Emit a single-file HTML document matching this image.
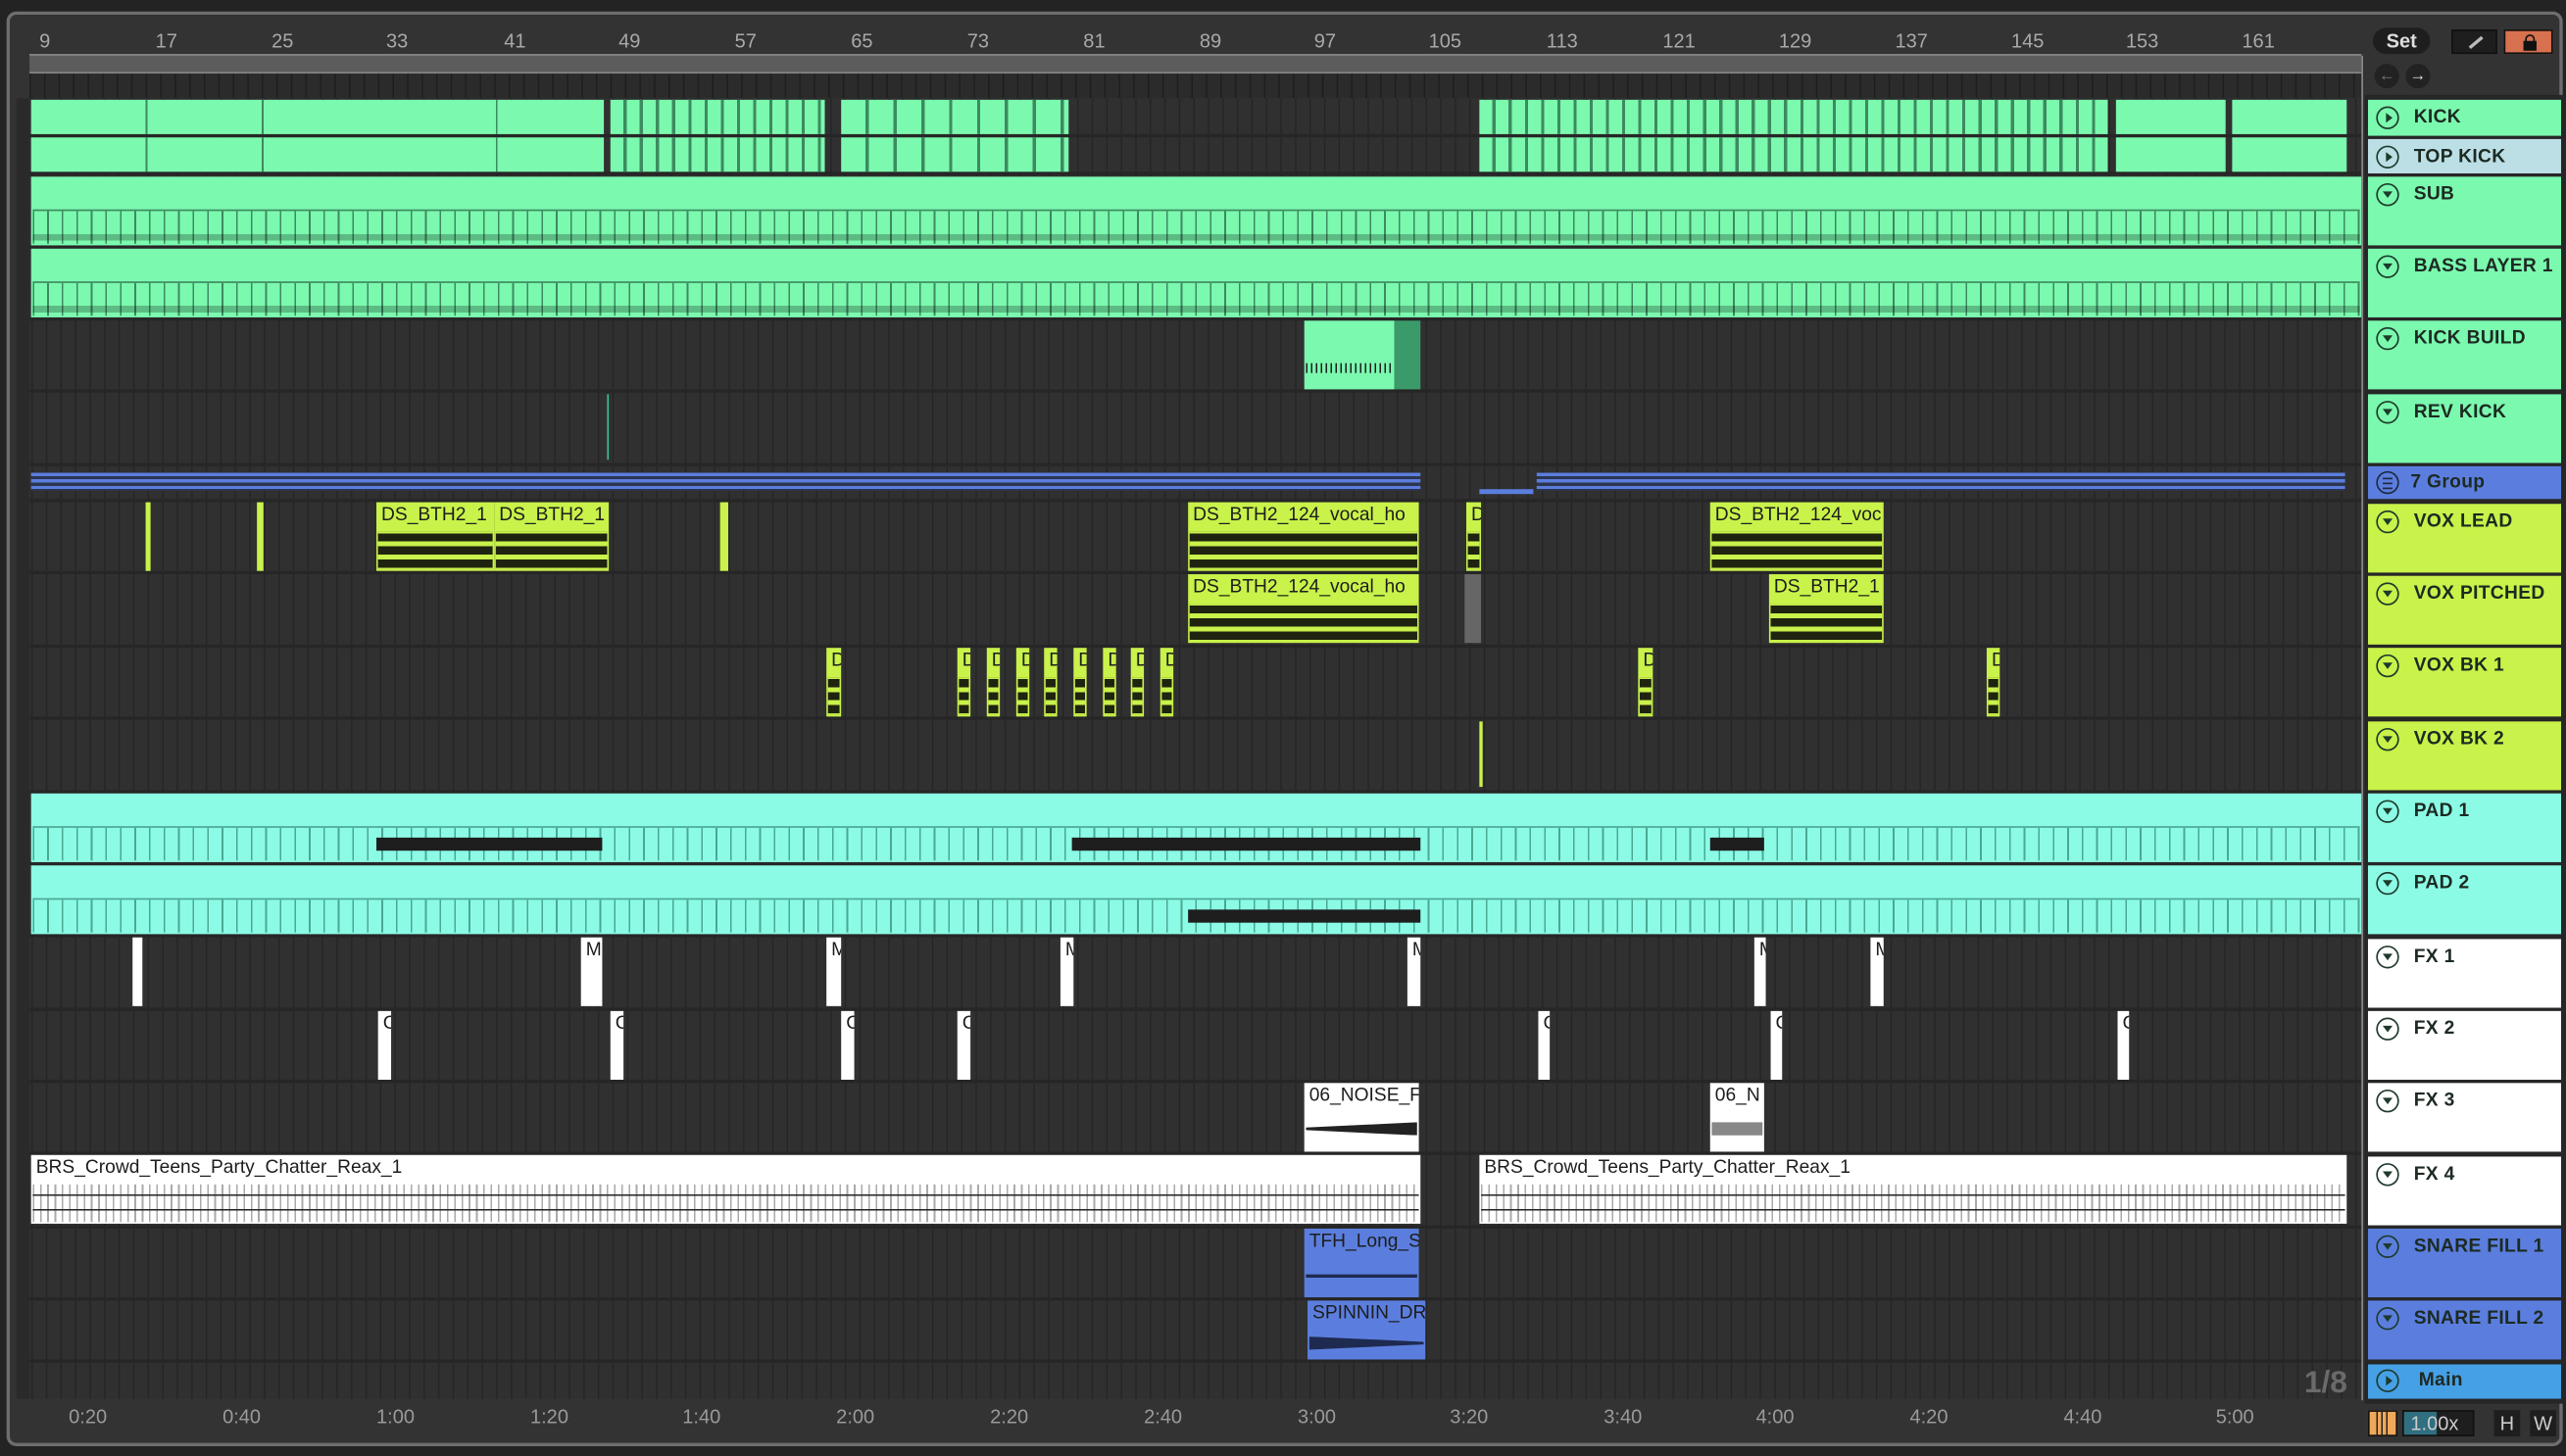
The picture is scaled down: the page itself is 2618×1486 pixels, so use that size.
<!DOCTYPE html>
<html><head><meta charset="utf-8"><style>
*{margin:0;padding:0;box-sizing:border-box}
html,body{width:2618px;height:1486px;overflow:hidden;background:#1f1f1f}
#s{position:absolute;left:0;top:0;width:1568px;height:890px;transform:scale(1.66964,1.66966);transform-origin:0 0;font-family:"Liberation Sans",sans-serif;background:#232323}
.frame{position:absolute;left:4px;top:7px;width:1562px;height:877px;border:2px solid #6e6e6e;border-radius:6px;background:#333}
.abs{position:absolute}
.arr{position:absolute;left:18px;top:60px;width:1425px;height:795px;background-color:#303030;background-image:linear-gradient(to right,#252525 0 1px,transparent 1px);background-size:8.88px 100%;background-position:1.2px 0}
.row{position:absolute;left:0;width:1425px}
.sep{position:absolute;left:0;width:1425px;height:2px;background:#262626}
.c{position:absolute;top:1px;bottom:1px;overflow:hidden;font-size:11.5px;white-space:nowrap;color:#1d1d1d}
.c .n{position:absolute;left:0;right:0;top:0;height:17px;padding:2px 3px;line-height:13px}
.c .w{position:absolute;left:1px;right:1px;top:18px;bottom:1px}
.g{background:#7bf9af}
.y{background:#c9f24a}
.wh{background:#fff}
.bl{background:#5b7ede}
.wy .w{background:repeating-linear-gradient(to bottom,#c9f24a 0 1px,#1f2410 1px 6px,#c9f24a 6px 9px,#1f2410 9px 14px,#c9f24a 14px 16px),#1f2410}
.hd{position:absolute;left:1447px;width:118px;font-size:11.5px;font-weight:bold;color:#1d2a22;letter-spacing:.2px}
.hd .ic{position:absolute;left:5px;top:4px;width:14px;height:14px;border:1.3px solid #1d3a2a;border-radius:50%}
.hd .ic.d::after{content:"";position:absolute;left:2.5px;top:4px;border-left:3.5px solid transparent;border-right:3.5px solid transparent;border-top:4.5px solid #1d3a2a}
.hd .ic.p::after{content:"";position:absolute;left:4.5px;top:2.5px;border-top:3.5px solid transparent;border-bottom:3.5px solid transparent;border-left:4.5px solid #1d3a2a}
.hd .ic.m::after{content:"";position:absolute;left:3px;top:3px;width:6px;height:5px;border-top:1px solid #1d2a40;border-bottom:1px solid #1d2a40;background:linear-gradient(#1d2a40,#1d2a40) center/6px 1px no-repeat}
.hd .t{position:absolute;left:28px;top:5px}
.rl{position:absolute;top:18px;font-size:12px;color:#a9a9a9}
.tl{position:absolute;top:859px;font-size:12px;color:#9a9a9a}
</style></head><body><div id="s">
<div class="frame"></div>
<div class="abs" style="left:18px;top:14px;width:1425px;height:20px;background:#333"></div>
<div class="rl" style="left:24px">9</div><div class="rl" style="left:95px">17</div><div class="rl" style="left:166px">25</div><div class="rl" style="left:236px">33</div><div class="rl" style="left:308px">41</div><div class="rl" style="left:378px">49</div><div class="rl" style="left:449px">57</div><div class="rl" style="left:520px">65</div><div class="rl" style="left:591px">73</div><div class="rl" style="left:662px">81</div><div class="rl" style="left:733px">89</div><div class="rl" style="left:803px">97</div><div class="rl" style="left:873px">105</div><div class="rl" style="left:945px">113</div><div class="rl" style="left:1016px">121</div><div class="rl" style="left:1087px">129</div><div class="rl" style="left:1158px">137</div><div class="rl" style="left:1229px">145</div><div class="rl" style="left:1299px">153</div><div class="rl" style="left:1370px">161</div>
<div class="abs" style="left:18px;top:33px;width:1425px;height:12px;background:#5c5c5c;border-top:1px solid #888;border-bottom:1px solid #888"></div>
<div class="abs" style="left:18px;top:45px;width:1425px;height:15px;background-color:#2b2b2b;background-image:linear-gradient(to right,#1e1e1e 0 1px,transparent 1px);background-size:8.88px 100%"></div>
<div class="abs" style="left:10px;top:60px;width:8px;height:795px;background:#2a2a2a"></div>
<div class="arr">
 <div class="sep" style="top:22px"></div><div class="sep" style="top:45px"></div><div class="sep" style="top:90px"></div><div class="sep" style="top:134px"></div><div class="sep" style="top:178px"></div><div class="sep" style="top:223px"></div><div class="sep" style="top:245px"></div><div class="sep" style="top:289px"></div><div class="sep" style="top:334px"></div><div class="sep" style="top:378px"></div><div class="sep" style="top:423px"></div><div class="sep" style="top:467px"></div><div class="sep" style="top:511px"></div><div class="sep" style="top:556px"></div><div class="sep" style="top:600px"></div><div class="sep" style="top:644px"></div><div class="sep" style="top:689px"></div><div class="sep" style="top:733px"></div><div class="sep" style="top:771px"></div>
 <div class="row" style="top:0;height:23px">
  <div class="c g" style="left:1px;width:350px;background-image:linear-gradient(to right,transparent 70px,#3d8a60 70px 71px,transparent 71px 141px,#3d8a60 141px 142px,transparent 142px 284px,#3d8a60 284px 285px,transparent 285px)"></div>
  <div class="c g" style="left:355px;width:131px;background-image:repeating-linear-gradient(to right,transparent 0 8px,#3d8a60 8px 9.9px)"></div>
  <div class="c g" style="left:496px;width:139px;background-image:repeating-linear-gradient(to right,transparent 0 15px,#3d8a60 15px 17px)"></div>
  <div class="c g" style="left:886px;width:384px;background-image:repeating-linear-gradient(to right,transparent 0 8px,#3d8a60 8px 9.9px)"></div>
  <div class="c g" style="left:1275px;width:67px"></div><div class="c g" style="left:1346px;width:70px"></div>
 </div>
 <div class="row" style="top:23px;height:23px">
  <div class="c g" style="left:1px;width:350px;background-image:linear-gradient(to right,transparent 70px,#3d8a60 70px 71px,transparent 71px 141px,#3d8a60 141px 142px,transparent 142px 284px,#3d8a60 284px 285px,transparent 285px)"></div>
  <div class="c g" style="left:355px;width:131px;background-image:repeating-linear-gradient(to right,transparent 0 8px,#3d8a60 8px 9.9px)"></div>
  <div class="c g" style="left:496px;width:139px;background-image:repeating-linear-gradient(to right,transparent 0 15px,#3d8a60 15px 17px)"></div>
  <div class="c g" style="left:886px;width:384px;background-image:repeating-linear-gradient(to right,transparent 0 8px,#3d8a60 8px 9.9px)"></div>
  <div class="c g" style="left:1275px;width:67px"></div><div class="c g" style="left:1346px;width:70px"></div>
 </div>
 <div class="row" style="top:47px;height:44px"><div class="c g" style="left:1px;width:1424px"><div class="w" style="top:20px;border-top:1px solid #3d8a60;background-image:linear-gradient(to bottom,transparent 14px,rgba(0,0,0,.25) 14px 18px,transparent 18px),repeating-linear-gradient(to right,#3d8a60 0 1px,transparent 1px 8.88px)"></div></div></div>
 <div class="row" style="top:91px;height:44px"><div class="c g" style="left:1px;width:1424px"><div class="w" style="top:20px;border-top:1px solid #3d8a60;background-image:linear-gradient(to bottom,transparent 14px,rgba(0,0,0,.25) 14px 18px,transparent 18px),repeating-linear-gradient(to right,#3d8a60 0 1px,transparent 1px 8.88px)"></div></div></div>
 <div class="row" style="top:135px;height:44px"><div class="c g" style="left:779px;width:55px"><div class="w" style="top:26px;height:6px;background:repeating-linear-gradient(to right,#1d1d1d 0 1px,transparent 1px 3px)"></div></div><div class="c" style="left:834px;width:16px;background:#3a9a6a"></div></div>
 <div class="row" style="top:179px;height:44px"><div class="abs" style="left:353px;top:2px;width:1px;height:40px;background:#3fbf8f"></div></div>
 <div class="row" style="top:224px;height:22px">
  <div class="abs" style="left:1px;top:5px;width:849px;height:11px;background:repeating-linear-gradient(to bottom,#5b7ede 0 2px,#2c3550 2px 4px)"></div>
  <div class="abs" style="left:886px;top:15px;width:33px;height:3px;background:#5b7ede"></div>
  <div class="abs" style="left:921px;top:5px;width:494px;height:11px;background:repeating-linear-gradient(to bottom,#5b7ede 0 2px,#2c3550 2px 4px)"></div>
 </div>
 <div class="row wy" style="top:246px;height:44px">
  <div class="c y" style="left:71px;width:3px"></div><div class="c y" style="left:139px;width:4px"></div>
  <div class="c y" style="left:212px;width:72px"><div class="n">DS_BTH2_1</div><div class="w"></div></div>
  <div class="c y" style="left:284px;width:70px"><div class="n">DS_BTH2_1</div><div class="w"></div></div>
  <div class="c y" style="left:422px;width:5px"></div>
  <div class="c y" style="left:708px;width:141px"><div class="n">DS_BTH2_124_vocal_ho</div><div class="w"></div></div>
  <div class="c y" style="left:878px;width:9px"><div class="n">D</div><div class="w"></div></div>
  <div class="c y" style="left:1027px;width:106px"><div class="n">DS_BTH2_124_voc</div><div class="w"></div></div>
 </div>
 <div class="row wy" style="top:290px;height:44px">
  <div class="c y" style="left:708px;width:141px"><div class="n">DS_BTH2_124_vocal_ho</div><div class="w"></div></div>
  <div class="c" style="left:877px;width:10px;background:#666"></div>
  <div class="c y" style="left:1063px;width:70px"><div class="n">DS_BTH2_1</div><div class="w"></div></div>
 </div>
 <div class="row wy" style="top:335px;height:44px">
  <div class="c y" style="left:487px;width:9px"><div class="n">D</div><div class="w"></div></div>
  <div class="c y" style="left:567px;width:8px"><div class="n">D</div><div class="w"></div></div>
  <div class="c y" style="left:585px;width:8px"><div class="n">D</div><div class="w"></div></div>
  <div class="c y" style="left:603px;width:8px"><div class="n">D</div><div class="w"></div></div>
  <div class="c y" style="left:620px;width:8px"><div class="n">D</div><div class="w"></div></div>
  <div class="c y" style="left:638px;width:8px"><div class="n">D</div><div class="w"></div></div>
  <div class="c y" style="left:656px;width:8px"><div class="n">D</div><div class="w"></div></div>
  <div class="c y" style="left:673px;width:8px"><div class="n">D</div><div class="w"></div></div>
  <div class="c y" style="left:691px;width:8px"><div class="n">D</div><div class="w"></div></div>
  <div class="c y" style="left:983px;width:9px"><div class="n">D</div><div class="w"></div></div>
  <div class="c y" style="left:1196px;width:8px"><div class="n">D</div><div class="w"></div></div>
 </div>
 <div class="row" style="top:379px;height:44px"><div class="abs" style="left:886px;top:2px;width:2px;height:40px;background:#c9f24a"></div></div>
 <div class="row" style="top:424px;height:44px"><div class="c" style="left:1px;width:1424px;background:#8cfbe6"><div class="w" style="top:20px;border-top:1px solid #4aa893;background-image:repeating-linear-gradient(to right,#4aa893 0 1px,transparent 1px 8.88px)"></div>
  <div class="abs" style="left:211px;top:27px;width:138px;height:8px;background:#1e1e1e"></div><div class="abs" style="left:636px;top:27px;width:213px;height:8px;background:#1e1e1e"></div><div class="abs" style="left:1026px;top:27px;width:33px;height:8px;background:#1e1e1e"></div></div></div>
 <div class="row" style="top:468px;height:44px"><div class="c" style="left:1px;width:1424px;background:#8cfbe6"><div class="w" style="top:20px;border-top:1px solid #4aa893;background-image:repeating-linear-gradient(to right,#4aa893 0 1px,transparent 1px 8.88px)"></div>
  <div class="abs" style="left:707px;top:27px;width:142px;height:8px;background:#1e1e1e"></div></div></div>
 <div class="row" style="top:512px;height:44px">
  <div class="c wh" style="left:63px;width:6px"></div><div class="c wh" style="left:337px;width:13px"><div class="n">M</div></div><div class="c wh" style="left:487px;width:9px"><div class="n">M</div></div><div class="c wh" style="left:630px;width:8px"><div class="n">M</div></div><div class="c wh" style="left:842px;width:8px"><div class="n">M</div></div><div class="c wh" style="left:1054px;width:7px"><div class="n">M</div></div><div class="c wh" style="left:1125px;width:8px"><div class="n">M</div></div>
 </div>
 <div class="row" style="top:557px;height:44px">
  <div class="c wh" style="left:213px;width:8px"><div class="n">C</div></div><div class="c wh" style="left:355px;width:8px"><div class="n">C</div></div><div class="c wh" style="left:496px;width:8px"><div class="n">C</div></div><div class="c wh" style="left:567px;width:8px"><div class="n">C</div></div><div class="c wh" style="left:922px;width:7px"><div class="n">C</div></div><div class="c wh" style="left:1064px;width:7px"><div class="n">C</div></div><div class="c wh" style="left:1276px;width:7px"><div class="n">C</div></div>
 </div>
 <div class="row" style="top:601px;height:44px">
  <div class="c wh" style="left:779px;width:70px"><div class="n">06_NOISE_F</div><div class="w" style="top:24px;height:8px;background:#222;clip-path:polygon(0 40%,100% 0,100% 100%,0 60%)"></div></div>
  <div class="c wh" style="left:1027px;width:33px"><div class="n">06_N</div><div class="w" style="top:24px;height:8px;background:#888"></div></div>
 </div>
 <div class="row" style="top:645px;height:44px">
  <div class="c wh" style="left:1px;width:849px"><div class="n">BRS_Crowd_Teens_Party_Chatter_Reax_1</div><div class="w" style="background-image:linear-gradient(to bottom,transparent 6px,#222 6px 7px,transparent 7px 15px,#222 15px 16px,transparent 16px),repeating-linear-gradient(to right,#aaa 0 1px,transparent 1px 4.44px)"></div></div>
  <div class="c wh" style="left:886px;width:530px"><div class="n">BRS_Crowd_Teens_Party_Chatter_Reax_1</div><div class="w" style="background-image:linear-gradient(to bottom,transparent 6px,#222 6px 7px,transparent 7px 15px,#222 15px 16px,transparent 16px),repeating-linear-gradient(to right,#aaa 0 1px,transparent 1px 4.44px)"></div></div>
 </div>
 <div class="row" style="top:690px;height:44px"><div class="c bl" style="left:779px;width:70px"><div class="n">TFH_Long_S</div><div class="w" style="top:28px;height:2px;background:#1e2a50"></div></div></div>
 <div class="row" style="top:734px;height:38px"><div class="c bl" style="left:781px;width:72px"><div class="n">SPINNIN_DR</div><div class="w" style="top:22px;height:8px;background:#1e2a50;clip-path:polygon(0 0,100% 40%,100% 60%,0 100%)"></div></div></div>
 <div class="abs" style="left:1390px;top:775px;font-size:19px;font-weight:bold;color:#6a6a6a">1/8</div>
</div>
<div class="abs" style="left:1443px;top:34px;width:1px;height:822px;background:#8a8a8a"></div>
<div class="abs" style="left:18px;top:856px;width:1425px;height:24px;background:#333"></div>
<div class="tl" style="left:42px">0:20</div><div class="tl" style="left:136px">0:40</div><div class="tl" style="left:230px">1:00</div><div class="tl" style="left:324px">1:20</div><div class="tl" style="left:417px">1:40</div><div class="tl" style="left:511px">2:00</div><div class="tl" style="left:605px">2:20</div><div class="tl" style="left:699px">2:40</div><div class="tl" style="left:793px">3:00</div><div class="tl" style="left:886px">3:20</div><div class="tl" style="left:980px">3:40</div><div class="tl" style="left:1073px">4:00</div><div class="tl" style="left:1167px">4:20</div><div class="tl" style="left:1261px">4:40</div><div class="tl" style="left:1354px">5:00</div>
<div class="abs" style="left:1450px;top:17px;width:35px;height:16px;border-radius:8px;background:#1e1e1e;color:#ddd;font-size:12px;font-weight:bold;text-align:center;line-height:16px">Set</div>
<div class="abs" style="left:1498px;top:18px;width:28px;height:15px;background:#1e1e1e;border:1px solid #111"><div class="abs" style="left:9px;top:6px;width:10px;height:2px;background:#bbb;transform:rotate(-40deg)"></div></div>
<div class="abs" style="left:1530px;top:18px;width:30px;height:15px;background:#d87150;border:1px solid #111"><div class="abs" style="left:11px;top:6px;width:8px;height:6px;background:#111"></div><div class="abs" style="left:12px;top:2px;width:6px;height:6px;border:1.5px solid #111;border-radius:3px 3px 0 0"></div></div>
<div class="abs" style="left:1451px;top:39px;width:15px;height:15px;border-radius:50%;background:#222;color:#777;font-size:10px;text-align:center;line-height:15px">&#8592;</div>
<div class="abs" style="left:1470px;top:39px;width:15px;height:15px;border-radius:50%;background:#222;color:#ddd;font-size:10px;text-align:center;line-height:15px">&#8594;</div>
<div class="abs" style="left:1445px;top:58px;width:123px;height:800px;background:#262626"></div>
<div class="hd" style="top:61px;height:22px;background:#7bf9af"><div class="ic p" style="top:4px"></div><div class="t">KICK</div></div>
<div class="hd" style="top:85px;height:21px;background:#bcdfe6"><div class="ic p"></div><div class="t">TOP KICK</div></div>
<div class="hd" style="top:108px;height:42px;background:#7bf9af"><div class="ic d"></div><div class="t">SUB</div></div>
<div class="hd" style="top:152px;height:42px;background:#7bf9af"><div class="ic d"></div><div class="t">BASS LAYER 1</div></div>
<div class="hd" style="top:196px;height:42px;background:#7bf9af"><div class="ic d"></div><div class="t">KICK BUILD</div></div>
<div class="hd" style="top:241px;height:42px;background:#7bf9af"><div class="ic d"></div><div class="t">REV KICK</div></div>
<div class="hd" style="top:285px;height:20px;background:#5b7ede"><div class="ic m" style="top:3px;border-color:#1d2a40"></div><div class="t" style="left:26px;top:4px">7 Group</div></div>
<div class="hd" style="top:308px;height:42px;background:#c9f24a"><div class="ic d"></div><div class="t">VOX LEAD</div></div>
<div class="hd" style="top:352px;height:42px;background:#c9f24a"><div class="ic d"></div><div class="t">VOX PITCHED</div></div>
<div class="hd" style="top:396px;height:42px;background:#c9f24a"><div class="ic d"></div><div class="t">VOX BK 1</div></div>
<div class="hd" style="top:441px;height:42px;background:#c9f24a"><div class="ic d"></div><div class="t">VOX BK 2</div></div>
<div class="hd" style="top:485px;height:42px;background:#8cfbe6"><div class="ic d"></div><div class="t">PAD 1</div></div>
<div class="hd" style="top:529px;height:42px;background:#8cfbe6"><div class="ic d"></div><div class="t">PAD 2</div></div>
<div class="hd" style="top:574px;height:42px;background:#fff"><div class="ic d"></div><div class="t">FX 1</div></div>
<div class="hd" style="top:618px;height:42px;background:#fff"><div class="ic d"></div><div class="t">FX 2</div></div>
<div class="hd" style="top:662px;height:42px;background:#fff"><div class="ic d"></div><div class="t">FX 3</div></div>
<div class="hd" style="top:707px;height:42px;background:#fff"><div class="ic d"></div><div class="t">FX 4</div></div>
<div class="hd" style="top:751px;height:42px;background:#5b7ede"><div class="ic d"></div><div class="t">SNARE FILL 1</div></div>
<div class="hd" style="top:795px;height:36px;background:#5b7ede"><div class="ic d"></div><div class="t">SNARE FILL 2</div></div>
<div class="hd" style="top:834px;height:21px;background:#46a0e6"><div class="ic p" style="top:3px"></div><div class="t" style="left:31px;top:4px">Main</div></div>
<div class="abs" style="left:1447px;top:862px;width:18px;height:16px;background:#f0a85a;border:1px solid #111;background-image:linear-gradient(to right,transparent 4px,#222 4px 5px,transparent 5px 7px,#222 7px 8px,transparent 8px 10px,#222 10px 11px,transparent 11px)"></div>
<div class="abs" style="left:1468px;top:862px;width:44px;height:16px;background:#1e1e1e;border:1px solid #111"><div class="abs" style="left:0;top:0;width:20px;height:14px;background:#2f6f80"></div><div class="abs" style="left:4px;top:0;color:#ccc;font-size:12px;line-height:14px">1.00x</div></div>
<div class="abs" style="left:1524px;top:862px;width:16px;height:16px;background:#1e1e1e;color:#ccc;font-size:12px;text-align:center;line-height:16px">H</div>
<div class="abs" style="left:1546px;top:862px;width:16px;height:16px;background:#1e1e1e;color:#ccc;font-size:12px;text-align:center;line-height:16px">W</div>
</div></body></html>
